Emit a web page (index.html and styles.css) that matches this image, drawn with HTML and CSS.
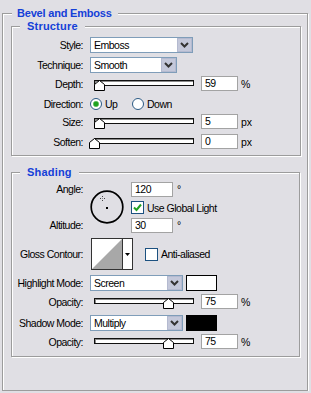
FILE: index.html
```html
<!DOCTYPE html>
<html>
<head>
    <title>Bevel and Emboss</title>
    <meta charset="utf-8">
    <link rel="stylesheet" href="styles.css">
</head>
<body>
    <fieldset class="group outer">
        <legend>Bevel and Emboss</legend>

        <fieldset class="group section structure">
            <legend>Structure</legend>

            <div class="row h16 gap4">
                <span class="label">Style:</span>
                <div class="select w-style">
                    <span class="select-text">Emboss</span>
                    <span class="select-btn"><svg width="9" height="6" viewBox="0 0 9 6"><path d="M1 1l3.5 3.5L8 1" fill="none" stroke="#333" stroke-width="2"/></svg></span>
                </div>
            </div>
            <div class="row h16 gap3">
                <span class="label">Technique:</span>
                <div class="select w-tech">
                    <span class="select-text">Smooth</span>
                    <span class="select-btn"><svg width="9" height="6" viewBox="0 0 9 6"><path d="M1 1l3.5 3.5L8 1" fill="none" stroke="#333" stroke-width="2"/></svg></span>
                </div>
            </div>
            <div class="row h15 gap5">
                <span class="label">Depth:</span>
                <div class="slider">
                    <div class="track"></div>
                    <svg class="thumb" style="left:0px" width="11" height="11" viewBox="0 0 11 11"><path d="M0.5 10.5V4.5L5.5 0.5L10.5 4.5V10.5Z" fill="#fff" stroke="#000"/></svg>
                </div>
                <span class="num">59</span>
                <span class="unit">%</span>
            </div>
            <div class="row h15 gap3">
                <span class="label">Direction:</span>
                <span class="option option-up"><span class="radio checked"></span>Up</span>
                <span class="option"><span class="radio"></span>Down</span>
            </div>
            <div class="row h15 gap5">
                <span class="label">Size:</span>
                <div class="slider">
                    <div class="track"></div>
                    <svg class="thumb" style="left:0px" width="11" height="11" viewBox="0 0 11 11"><path d="M0.5 10.5V4.5L5.5 0.5L10.5 4.5V10.5Z" fill="#fff" stroke="#000"/></svg>
                </div>
                <span class="num">5</span>
                <span class="unit">px</span>
            </div>
            <div class="row h15">
                <span class="label">Soften:</span>
                <div class="slider">
                    <div class="track"></div>
                    <svg class="thumb" style="left:-5px" width="11" height="11" viewBox="0 0 11 11"><path d="M0.5 10.5V4.5L5.5 0.5L10.5 4.5V10.5Z" fill="#fff" stroke="#000"/></svg>
                </div>
                <span class="num">0</span>
                <span class="unit">px</span>
            </div>
        </fieldset>

        <fieldset class="group section shading">
            <legend>Shading</legend>

            <div class="angle-block">
                <div class="angle-labels">
                    <span class="angle-label">Angle:</span>
                    <span class="angle-label altitude">Altitude:</span>
                </div>
                <svg class="dial" width="34" height="34" viewBox="0 0 34 34">
                    <circle cx="17" cy="17" r="15.8" fill="none" stroke="#000" stroke-width="1.7"/>
                    <rect x="16" y="17" width="2" height="2" fill="#000"/>
                    <!-- light direction, 120 deg -->
                    <rect x="12" y="6" width="1" height="1" fill="#444"/>
                    <rect x="12" y="10" width="1" height="1" fill="#444"/>
                    <rect x="10" y="8" width="1" height="1" fill="#444"/>
                    <rect x="14" y="8" width="1" height="1" fill="#444"/>
                    <rect x="12" y="8" width="1" height="1" fill="#888"/>
                </svg>
                <div class="angle-fields">
                    <div class="field-line">
                        <span class="num num-angle">120</span>
                        <span class="deg">°</span>
                    </div>
                    <div class="check-line">
                        <span class="check"><svg width="11" height="11" viewBox="0 0 11 11"><path d="M2 5.5L4.5 8L9 2.5" fill="none" stroke="#21a121" stroke-width="2"/></svg></span>
                        Use Global Light
                    </div>
                    <div class="field-line altitude-line">
                        <span class="num num-angle">30</span>
                        <span class="deg">°</span>
                    </div>
                </div>
            </div>

            <div class="row h32 gap4">
                <span class="label">Gloss Contour:</span>
                <div class="contour">
                    <svg class="contour-preview" width="30" height="30" viewBox="0 0 30 30">
                        <path d="M0 30L30 0V30Z" fill="#a8a8a8"/>
                    </svg>
                    <span class="contour-btn"><svg width="5" height="3" viewBox="0 0 5 3"><path d="M0 0H5L2.5 3Z" fill="#000"/></svg></span>
                </div>
                <span class="check check-aa"></span>
                <span>Anti-aliased</span>
            </div>
            <div class="row h17 gap3">
                <span class="label">Highlight Mode:</span>
                <div class="select w-mode">
                    <span class="select-text">Screen</span>
                    <span class="select-btn"><svg width="9" height="6" viewBox="0 0 9 6"><path d="M1 1l3.5 3.5L8 1" fill="none" stroke="#333" stroke-width="2"/></svg></span>
                </div>
                <span class="swatch swatch-white"></span>
            </div>
            <div class="row h15 gap5">
                <span class="label">Opacity:</span>
                <div class="slider">
                    <div class="track"></div>
                    <svg class="thumb" style="left:69px" width="11" height="11" viewBox="0 0 11 11"><path d="M0.5 10.5V4.5L5.5 0.5L10.5 4.5V10.5Z" fill="#fff" stroke="#000"/></svg>
                </div>
                <span class="num">75</span>
                <span class="unit">%</span>
            </div>
            <div class="row h17 gap3">
                <span class="label">Shadow Mode:</span>
                <div class="select w-mode">
                    <span class="select-text">Multiply</span>
                    <span class="select-btn"><svg width="9" height="6" viewBox="0 0 9 6"><path d="M1 1l3.5 3.5L8 1" fill="none" stroke="#333" stroke-width="2"/></svg></span>
                </div>
                <span class="swatch swatch-black"></span>
            </div>
            <div class="row h15">
                <span class="label">Opacity:</span>
                <div class="slider">
                    <div class="track"></div>
                    <svg class="thumb" style="left:69px" width="11" height="11" viewBox="0 0 11 11"><path d="M0.5 10.5V4.5L5.5 0.5L10.5 4.5V10.5Z" fill="#fff" stroke="#000"/></svg>
                </div>
                <span class="num">75</span>
                <span class="unit">%</span>
            </div>
        </fieldset>
    </fieldset>
</body>
</html>
```

FILE: styles.css
```css
body {
    margin: 0;
    background-color: #e0dfe4;
    font-family: "Liberation Sans", Arial, sans-serif;
    font-size: 10.5px;
    line-height: 12px;
    letter-spacing: -0.5px;
    color: #000;
}

/* etched group boxes */
.group {
    box-sizing: border-box;
    margin: 0;
    padding: 0;
    min-width: 0;
    border: 1px solid #9c9c9c;
    box-shadow: inset 1px 1px 0 #fff, 1px 1px 0 #fff;
}
.group > legend {
    font-size: 11px;
    font-weight: bold;
    line-height: 13px;
    letter-spacing: 0;
    color: #1440d8;
    background-color: #e0dfe4;
}

.outer {
    width: 306px;
    margin: 7px 0 0 2px;
    padding: 0 6px 33px 8px;
}
.outer > legend {
    margin-left: 1px;
    padding: 0 6px 0 5px;
    letter-spacing: -0.2px;
}

.section > legend {
    margin-left: 8px;
    padding: 0 7px;
    letter-spacing: 0.2px;
}
.structure {
    width: 290px;
    padding: 4px 0 6px 0;
}
.shading {
    width: 289px;
    margin-top: 10px;
    padding: 3px 0 7px 0;
}

/* rows */
.row {
    display: flex;
    align-items: center;
}
.h15 { height: 15px; }
.h16 { height: 16px; }
.h17 { height: 17px; }
.h32 { height: 32px; }
.gap3 { margin-bottom: 3px; }
.gap4 { margin-bottom: 4px; }
.gap5 { margin-bottom: 5px; }

.label {
    flex: none;
    width: 71px;
    margin-right: 7px;
    text-align: right;
}

/* dropdowns */
.select {
    box-sizing: border-box;
    display: flex;
    height: 16px;
    border: 1px solid #7f9db9;
    background-color: #fff;
}
.w-style { width: 103px; }
.w-tech { width: 87px; }
.w-mode { width: 93px; }
.select-text {
    flex: 1;
    padding-left: 3px;
    line-height: 14px;
}
.select-btn {
    box-sizing: border-box;
    width: 15px;
    height: 14px;
    display: flex;
    align-items: center;
    justify-content: center;
    background-color: #c4c8da;
    border: 1px solid #b4bad0;
}

/* sliders */
.slider {
    position: relative;
    flex: none;
    width: 100px;
    height: 15px;
    margin-left: 4px;
}
.track {
    box-sizing: border-box;
    height: 6px;
    margin-top: 4px;
    border: 1px solid #111;
    background-color: #fff;
    box-shadow: inset 1px 1px 0 #8a8a8a;
}
.thumb {
    position: absolute;
    top: 4px;
}

.num {
    box-sizing: border-box;
    flex: none;
    width: 37px;
    height: 15px;
    margin-left: 7px;
    padding-left: 3px;
    border: 1px solid #a3a3a3;
    background-color: #fff;
    line-height: 13px;
}
.unit {
    margin-left: 3px;
    letter-spacing: 0;
}

/* radios and checkboxes */
.option {
    display: flex;
    align-items: center;
}
.option-up {
    width: 42px;
}
.radio {
    box-sizing: border-box;
    width: 12px;
    height: 12px;
    margin-right: 3px;
    border: 1px solid #2b5a84;
    border-radius: 50%;
    background-color: #fff;
}
.radio.checked {
    background: radial-gradient(circle, #1fa21f 0, #1fa21f 2px, #9fd89f 3px, #fff 3.5px);
}
.check {
    box-sizing: border-box;
    flex: none;
    width: 13px;
    height: 13px;
    margin-right: 3px;
    border: 1px solid #1c5180;
    background-color: #fff;
    display: flex;
}
.check-aa {
    margin-left: 12px;
}

/* angle / altitude */
.angle-block {
    display: flex;
    height: 52px;
    margin-bottom: 4px;
}
.angle-labels {
    flex: none;
    width: 71px;
    margin-right: 7px;
    display: flex;
    flex-direction: column;
    text-align: right;
}
.angle-label {
    height: 15px;
    line-height: 15px;
}
.angle-label.altitude {
    margin-top: 21px;
}
.dial {
    flex: none;
    margin-top: 8px;
}
.angle-fields {
    margin-left: 7px;
}
.field-line {
    display: flex;
    height: 15px;
}
.num-angle {
    width: 42px;
    margin-left: 0;
}
.deg {
    margin-left: 4px;
    line-height: 15px;
}
.check-line {
    display: flex;
    align-items: center;
    height: 13px;
    margin-top: 4px;
}
.altitude-line {
    margin-top: 4px;
}

/* gloss contour */
.contour {
    box-sizing: border-box;
    flex: none;
    display: flex;
    width: 42px;
    height: 32px;
    margin-left: 1px;
    border: 1px solid #333;
    background-color: #fff;
}
.contour-btn {
    flex: 1;
    display: flex;
    align-items: center;
    justify-content: center;
    border-left: 1px solid #333;
}

.swatch {
    box-sizing: border-box;
    flex: none;
    width: 31px;
    height: 16px;
    margin-left: 3px;
    border: 1px solid #000;
}
.swatch-white { background-color: #fff; }
.swatch-black { background-color: #000; }
```
